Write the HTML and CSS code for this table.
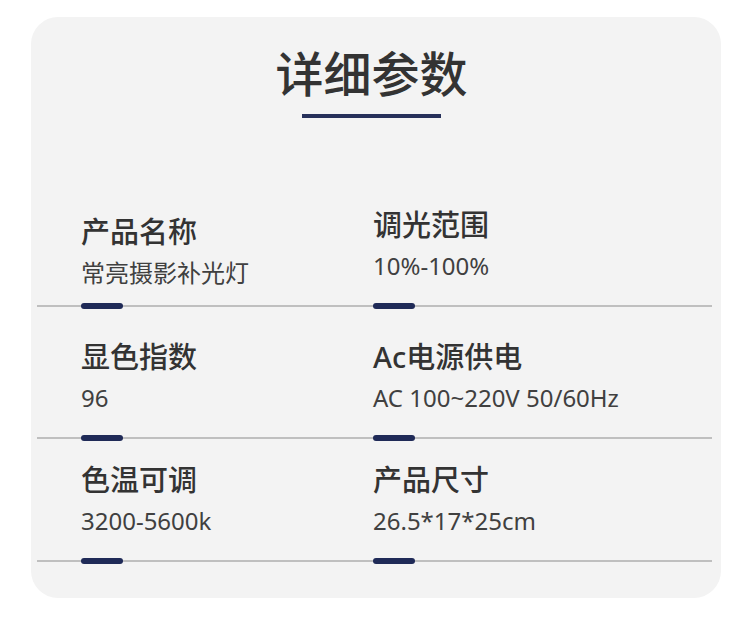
FILE: index.html
```html
<!DOCTYPE html>
<html lang="zh-CN">
<head>
<meta charset="utf-8">
<title>详细参数</title>
<link rel="stylesheet" href="styles.css">
</head>
<body>
<section class="card">
  <header class="head">
    <h1 class="title">详细参数</h1>
    <div class="title-bar"></div>
  </header>
  <div class="specs">
    <div class="row row--first">
      <div class="cell cell--shift">
        <div class="label">产品名称</div>
        <div class="value">常亮摄影补光灯</div>
        <div class="rule"><span class="pill"></span></div>
      </div>
      <div class="cell">
        <div class="label">调光范围</div>
        <div class="value">10%-100%</div>
        <div class="rule"><span class="pill"></span></div>
      </div>
    </div>
    <div class="row row--second">
      <div class="cell">
        <div class="label">显色指数</div>
        <div class="value">96</div>
        <div class="rule"><span class="pill"></span></div>
      </div>
      <div class="cell">
        <div class="label">Ac电源供电</div>
        <div class="value">AC 100~220V 50/60Hz</div>
        <div class="rule"><span class="pill"></span></div>
      </div>
    </div>
    <div class="row row--third">
      <div class="cell">
        <div class="label">色温可调</div>
        <div class="value">3200-5600k</div>
        <div class="rule"><span class="pill"></span></div>
      </div>
      <div class="cell">
        <div class="label">产品尺寸</div>
        <div class="value">26.5*17*25cm</div>
        <div class="rule"><span class="pill"></span></div>
      </div>
    </div>
  </div>
</section>
</body>
</html>
```
FILE: styles.css
```css
* { box-sizing: border-box; }

html, body {
  margin: 0;
  padding: 0;
  background: #ffffff;
}

body {
  font-family: "Noto Sans", "Noto Sans CJK SC", sans-serif;
  color: #333333;
}

.card {
  margin: 17px 0 0 31px;
  width: 690px;
  height: 581px;
  background: #f3f3f3;
  border-radius: 27px;
  padding: 30px 9px 0 0;
}

.head {
  display: flex;
  flex-direction: column;
  align-items: center;
}

.title {
  margin: 0;
  font-family: "Noto Sans CJK SC", sans-serif;
  font-size: 48px;
  line-height: 1;
  font-weight: 500;
  color: #333333;
}

.title-bar {
  margin-top: 19px;
  width: 139px;
  height: 4px;
  background: #26305a;
}

.specs {
  margin: 92px 0 0 6px;
  display: flex;
  flex-direction: column;
}

.row {
  display: grid;
  grid-template-columns: 292px 383px;
  align-items: start;
}

.row--second { margin-top: 33px; }
.row--third { margin-top: 24px; }

.cell {
  display: flex;
  flex-direction: column;
}

.label {
  margin-left: 44px;
  font-size: 29px;
  line-height: 29px;
  font-weight: 500;
  color: #333333;
  white-space: nowrap;
}

.value {
  margin: 15px 0 0 44px;
  font-size: 24px;
  line-height: 24px;
  font-weight: 400;
  color: #404040;
  white-space: nowrap;
}

.rule {
  margin-top: 25px;
  height: 6px;
  background: linear-gradient(to bottom, transparent 2px, #bfbfbf 2px, #bfbfbf 4px, transparent 4px);
}

.cell--shift { padding-top: 7px; }
.cell--shift .rule { margin-top: 18px; }

.pill {
  display: block;
  margin-left: 44px;
  width: 42px;
  height: 6px;
  border-radius: 3px;
  background: #1f2a57;
}
```
